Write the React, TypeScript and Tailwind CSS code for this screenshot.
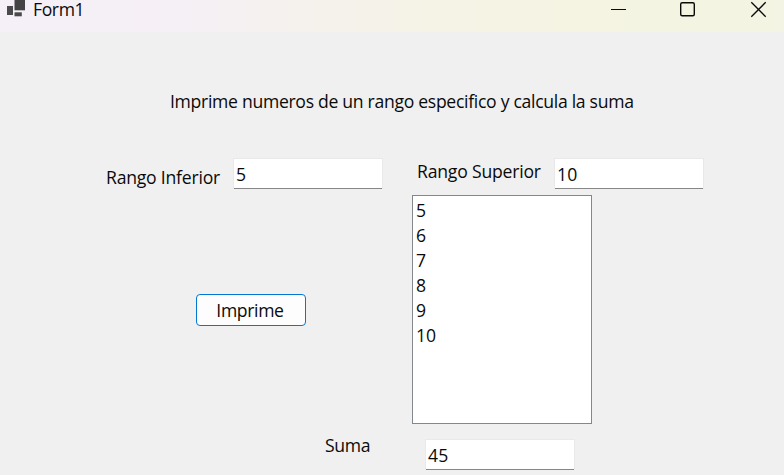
import type { ReactNode } from 'react';

const numbers = [5, 6, 7, 8, 9, 10];

function Label({ className, children }: { className: string; children: ReactNode }) {
  return <span className={`block h-6 whitespace-nowrap leading-6 ${className}`}>{children}</span>;
}

function TextBox({ value, className }: { value: string; className: string }) {
  return (
    <div
      className={`h-[31px] w-[150px] shrink-0 border-x border-t border-[#e9e9e9] bg-white ${className}`}
    >
      <div className="h-[30px] border-b border-[#868686] pl-[2.1px] pt-[3px] leading-6">{value}</div>
    </div>
  );
}

function TitleBar() {
  return (
    <header className="flex h-8 items-start bg-[linear-gradient(90deg,#f5eff8_0%,#f5f0f5_24%,#f4f2ec_40%,#f5f3e6_55%,#f5f4e2_75%,#f4f4e4_100%)]">
      <svg className="ml-[6px] shrink-0" width="20" height="18" viewBox="0 0 20 18">
        <rect x="1" y="6" width="6" height="9" fill="#4a4a4a" />
        <rect x="8.5" y="0" width="10.5" height="10.3" fill="#444444" />
        <rect x="8.5" y="12.3" width="7.3" height="4" fill="#4a4a4a" />
      </svg>
      <span className="ml-[7px] h-[18px] leading-[18px] tracking-[-0.4px]">Form1</span>
      <div className="ml-auto flex">
        <svg width="180" height="20" viewBox="0 0 180 20" fill="none" stroke="#0a0a0a">
          <path d="M7 9.5H22" />
          <rect x="76.7" y="2.7" width="13.6" height="13.1" rx="1.5" strokeWidth="1.4" />
          <path d="M147.3 2.3L161.7 16.7M161.7 2.3L147.3 16.7" strokeWidth="1.3" />
        </svg>
      </div>
    </header>
  );
}

export default function App() {
  return (
    <div className="h-[475px] w-[784px] overflow-hidden bg-[#f0f0f0] font-['Open_Sans','Noto_Sans',sans-serif] text-[17.6px] text-[#0a0a0a]">
      <TitleBar />
      <main>
        <Label className="ml-[170px] mt-[57px] tracking-[-0.3px]">
          Imprime numeros de un rango especifico y calcula la suma
        </Label>
        <div className="mt-[45px] flex h-[37px] items-start">
          <Label className="ml-[106px] mt-[7px] w-[127px] tracking-[-0.22px]">Rango Inferior</Label>
          <TextBox value="5" className="" />
          <Label className="ml-[34px] mt-px w-[137px] tracking-[-0.2px]">Rango Superior</Label>
          <TextBox value="10" className="" />
        </div>
        <div className="flex h-[229px] items-start">
          <button className="ml-[196px] mt-[99px] h-8 w-[110px] shrink-0 rounded-[4px] border border-[#0078d4] bg-[#fdfdfd] pb-px pr-[2px] leading-6 tracking-[-0.35px]">
            Imprime
          </button>
          <ul className="ml-[106px] h-[229px] w-[180px] shrink-0 border border-[#828790] bg-white pl-[3px] pt-[2px]">
            {numbers.map((n) => (
              <li key={n} className="h-[25px] leading-6">
                {n}
              </li>
            ))}
          </ul>
        </div>
        <div className="flex items-start">
          <Label className="ml-[325px] mt-[9px] w-[100px] tracking-[-0.35px]">Suma</Label>
          <TextBox value="45" className="mt-[15px]" />
        </div>
      </main>
    </div>
  );
}
